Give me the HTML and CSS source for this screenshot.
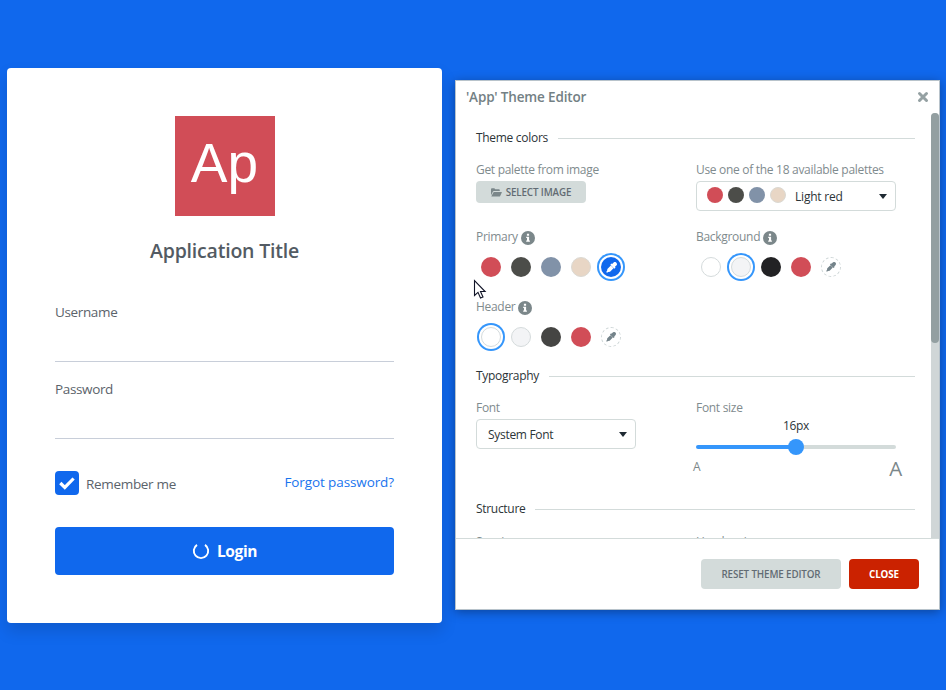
FILE: index.html
```html
<!DOCTYPE html>
<html lang="en">
<head>
<meta charset="utf-8">
<title>App Theme Editor</title>
<link rel="stylesheet" href="styles.css">
</head>
<body>
<svg class="defs" width="0" height="0">
  <symbol id="dropper" viewBox="0 0 12 12">
    <path d="M11.300.7a2.300 2.300 0 0 0-3.200 0L6.700 2.200l-.6-.6-1.400 1.400 4.300 4.300 1.400-1.400-.6-.6 1.500-1.500a2.300 2.300 0 0 0 0-3.100z"/>
    <path d="M5.300 3.800 1.500 7.600l-.3 2L.2 10.900l.9.9 1.300-1 2-.3 3.800-3.800z"/>
  </symbol>
  <symbol id="info" viewBox="0 0 14 14">
    <circle cx="7" cy="7" r="7"/>
    <path fill="#fff" d="M5.900 2.800h2.200v1.900H5.900zM5.200 5.700h2.900v3.800h.8v1.300H5.200V9.500h.8V7h-.8z"/>
  </symbol>
</svg>
<main class="stage">
  <form class="login">
    <div class="logo">Ap</div>
    <h1 class="title">Application Title</h1>
    <div class="field"><label>Username</label></div>
    <div class="field"><label>Password</label></div>
    <div class="options">
      <span class="check"><svg width="16" height="14" viewBox="0 0 16 14"><path d="M1.300 7 5.800 11.400 14.600 2.500" fill="none" stroke="#fff" stroke-width="3.200"/></svg></span>
      <span class="remember">Remember me</span>
      <a class="forgot">Forgot password?</a>
    </div>
    <div class="submit">
      <svg width="18" height="18" viewBox="0 0 18 18"><path d="M5 2.900A7.200 7.200 0 1 0 13 2.900" fill="none" stroke="#fff" stroke-width="1.900"/></svg>
      <span>Login</span>
    </div>
  </form>

  <section class="editor">
    <header class="editor-head">
      <h2>'App' Theme Editor</h2>
      <svg width="12" height="12" viewBox="0 0 12 12"><path d="M2.500 2.500l7 7M9.500 2.500l-7 7" stroke="#95a1a3" stroke-width="3" stroke-linecap="round"/></svg>
    </header>
    <div class="viewport">
      <div class="content">
        <h3 class="rule"><span>Theme colors</span></h3>
        <div class="row palette">
          <div class="col">
            <div class="label"><span>Get palette from image</span></div>
            <div class="btn select-image">
              <svg width="11" height="9" viewBox="0 0 11 9"><path d="M0 7.200V1.200Q0 .3.900.3h2.400l1 1h3.600q.9 0 .9.900v.9H3q-.9 0-1.300.8z"/><path d="M.3 8.500 2.300 4.500q.3-.6.9-.6H10.500q.6 0 .3.600L9.200 7.900q-.3.600-.9.600z"/></svg>
              <span>SELECT IMAGE</span>
            </div>
          </div>
          <div class="col">
            <div class="label"><span>Use one of the 18 available palettes</span></div>
            <div class="select wide">
              <span class="dots"><i class="dot red"></i><i class="dot dark"></i><i class="dot slate"></i><i class="dot sand"></i></span>
              <span class="name">Light red</span><b class="caret"></b>
            </div>
          </div>
        </div>
        <div class="row colors">
          <div class="col">
            <div class="label"><span>Primary</span><svg class="info" width="14" height="14"><use href="#info"/></svg></div>
            <div class="swatches">
              <i class="swatch red"></i><i class="swatch dark"></i><i class="swatch slate"></i><i class="swatch sand"></i>
              <i class="swatch blue picked"><svg width="11" height="11"><use href="#dropper"/></svg></i>
            </div>
          </div>
          <div class="col">
            <div class="label"><span>Background</span><svg class="info" width="14" height="14"><use href="#info"/></svg></div>
            <div class="swatches">
              <i class="swatch white"></i><i class="swatch light picked"></i><i class="swatch black"></i><i class="swatch red"></i>
              <i class="swatch custom"><svg width="10" height="10"><use href="#dropper"/></svg></i>
            </div>
          </div>
        </div>
        <div class="row colors">
          <div class="col">
            <div class="label"><span>Header</span><svg class="info" width="14" height="14"><use href="#info"/></svg></div>
            <div class="swatches">
              <i class="swatch white picked"></i><i class="swatch light"></i><i class="swatch char"></i><i class="swatch red"></i>
              <i class="swatch custom"><svg width="10" height="10"><use href="#dropper"/></svg></i>
            </div>
          </div>
        </div>
        <h3 class="rule typo"><span>Typography</span></h3>
        <div class="row fonts">
          <div class="col">
            <div class="label"><span>Font</span></div>
            <div class="select"><span>System Font</span><b class="caret"></b></div>
          </div>
          <div class="col">
            <div class="label"><span>Font size</span></div>
            <div class="value">16px</div>
            <div class="track"><i class="thumb"></i></div>
            <div class="scale"><span class="small-a">A</span><span class="big-a">A</span></div>
          </div>
        </div>
        <h3 class="rule"><span>Structure</span></h3>
        <div class="row last">
          <div class="col"><div class="label"><span>Spacing</span></div></div>
          <div class="col"><div class="label"><span>Header size</span></div></div>
        </div>
      </div>
      <div class="scrollbar"><i></i></div>
    </div>
    <footer class="editor-foot">
      <div class="btn reset"><span>RESET THEME EDITOR</span></div>
      <div class="btn close"><span>CLOSE</span></div>
    </footer>
  </section>
</main>
<svg class="cursor" width="14" height="20" viewBox="0 0 14 20"><path d="M1.500 1.500v15l3.500-3.200 2.500 5.700 2.500-1.100-2.500-5.400h4.600z" fill="#fff" stroke="#111427" stroke-width="1.100"/></svg>
</body>
</html>
```
FILE: styles.css
```css
* { box-sizing: border-box; }
body {
  margin: 0;
  height: 690px;
  overflow: hidden;
  background: #1068ed;
  font-family: "Open Sans", "Noto Sans", sans-serif;
  color: #2c3438;
  white-space: nowrap;
}
h1, h2, h3 { margin: 0; font-weight: 400; }
svg { flex: none; display: block; }
.defs { position: absolute; }
.stage { display: flex; align-items: flex-start; gap: 13px; padding: 68px 6px 0 7px; }

.login {
  width: 435px;
  height: 555px;
  padding: 48px 48px 0;
  background: #fff;
  border-radius: 4px;
  box-shadow: 0 8px 16px rgba(0, 0, 0, .13);
  color: #5b636b;
}
.logo {
  width: 100px;
  height: 100px;
  margin: 0 auto;
  background: #d14d57;
  color: #fff;
  font: 55px/94px "Liberation Sans", sans-serif;
  text-align: center;
}
.title { margin-top: 20px; height: 30px; font-size: 19.500px; font-weight: 600; line-height: 30px; text-align: center; letter-spacing: -.2px; color: #535b63; }
.field { height: 77px; border-bottom: 1px solid #c8ced9; font-size: 13.500px; line-height: 20px; letter-spacing: -.36px; }
.field label { display: block; padding-top: 17px; }
.title + .field { margin-top: 19px; }
.options { display: flex; align-items: center; height: 24px; margin-top: 32px; font-size: 13.500px; line-height: 20px; }
.check { display: flex; align-items: center; justify-content: center; width: 24px; height: 24px; border-radius: 4px; background: #1068ed; }
.remember { margin: 2px 0 0 7px; letter-spacing: -.32px; }
.forgot { margin-left: auto; margin-bottom: 2px; color: #1874ee; letter-spacing: -.1px; }
.submit { display: flex; align-items: center; justify-content: center; gap: 7px; height: 48px; margin-top: 32px; border-radius: 4px; background: #1068ed; color: #fff; font-size: 15.500px; font-weight: 700; letter-spacing: -.4px; }

.editor {
  width: 485px;
  height: 530px;
  margin-top: 12px;
  background: #fff;
  border: 1px solid #b8c3cb;
  box-shadow: 0 2px 10px rgba(0, 0, 0, .35);
  font-size: 12px;
  letter-spacing: -.3px;
}
.editor-head { display: flex; align-items: center; justify-content: space-between; height: 32px; padding: 0 10px 0 10px; }
.editor-head h2 { font-size: 13.500px; font-weight: 600; color: #738084; letter-spacing: -.16px; }
.viewport { display: flex; height: 425px; overflow: hidden; }
.content { width: 475px; padding: 15px 16px 0 20px; }
.scrollbar { width: 8px; height: 425px; background: #d0d6d7; border-radius: 4px 4px 0 0; }
.scrollbar i { display: block; height: 230px; border-radius: 4px; background: #939fa1; }
.rule { display: flex; align-items: center; gap: 10px; height: 20px; font-size: 12px; }
.rule::after { content: ""; flex: 1; height: 1px; background: #d3dbda; }
.rule span { margin-top: -1px; }
.row { display: grid; grid-template-columns: 220px 200px; }
.label { display: flex; align-items: center; height: 20px; gap: 3px; line-height: 20px; color: #7f8b8e; }
.info { fill: #7b878a; margin-top: 2px; }
.palette { height: 66px; padding-top: 12px; }
.palette .label, .fonts .label { height: 21px; }
.palette .label span, .fonts .label span { margin-top: -1px; }
.colors { height: 70px; padding-top: 13px; }
.btn { display: flex; align-items: center; justify-content: center; height: 30px; border-radius: 4px; background: #d3dbda; color: #626b73; font-size: 9.800px; font-weight: 600; letter-spacing: -.12px; }
.select-image { width: 110px; height: 22px; gap: 4px; fill: #7b878a; }
.select { display: flex; align-items: center; width: 160px; height: 30px; padding: 0 8px 0 11px; border: 1px solid #d3dbda; border-radius: 4px; }
.select.wide { width: 200px; padding-left: 10px; }
.name { letter-spacing: -.2px; }
.caret { width: 0; height: 0; margin-left: auto; border: 4px solid transparent; border-top: 5px solid #1f2a33; border-bottom: 0; }
.dots { display: flex; gap: 5px; margin: -3px 9px 0 0; }
.dot { width: 16px; height: 16px; border-radius: 50%; }
.swatches { display: flex; align-items: center; gap: 10px; height: 20px; margin: 10px 0 0 5px; }
.swatch { display: flex; align-items: center; justify-content: center; width: 20px; height: 20px; border-radius: 50%; }
.red { background: #d14d57; }
.dark { background: #4c4d49; }
.char { background: #454543; }
.slate { background: #8192a8; }
.sand { background: #e8d6c5; border: 1px solid #dbd9d3; }
.blue { background: #1068ed; fill: #fff; }
.white { background: #fff; border: 1px solid #d5dbdc; }
.light { background: #f3f4f6; border: 1px solid #d5dbdc; }
.black { background: #222224; }
.custom { border: 1px dashed #cdd5d6; fill: #74838a; }
.picked { box-shadow: 0 0 0 2px #fff, 0 0 0 4px #3596fb; }
.typo { margin-top: 12px; }
.fonts { height: 113px; padding-top: 12px; }
.value { height: 14px; margin-top: 0; line-height: 14px; text-align: center; }
.track { display: flex; justify-content: center; align-items: center; height: 4px; margin-top: 12px; border-radius: 2px; background: linear-gradient(90deg, #3596fb 50%, #d3dbda 50%); }
.thumb { flex: none; width: 16px; height: 16px; border-radius: 50%; background: #3596fb; }
.scale { display: flex; justify-content: space-between; align-items: flex-start; margin: 7px -6px 0 -3px; line-height: 22px; color: #7b878a; }
.big-a { font-size: 20.500px; line-height: 25px; }
.last { padding-top: 13px; }
.editor-foot { display: flex; gap: 8px; justify-content: flex-end; height: 71px; padding: 20px 20px 0 0; border-top: 1px solid #d3dbda; }
.reset { width: 140px; }
.close { width: 70px; background: #cb2200; color: #fff; font-weight: 700; }
.cursor { position: absolute; left: 473px; top: 279px; }
```
